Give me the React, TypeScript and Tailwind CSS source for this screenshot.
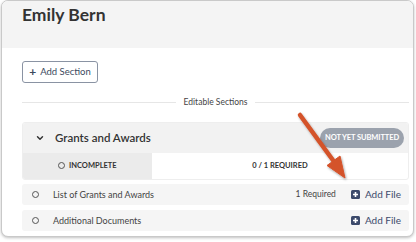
import React from "react";
import { ChevronDown } from "lucide-react";

const font = { fontFamily: "Lato, 'Open Sans', sans-serif" };

function PlusSquare() {
  return (
    <svg width="9" height="9" viewBox="0 0 9 9" className="shrink-0">
      <rect x="0" y="0" width="9" height="9" rx="1.5" fill="#3c4a6b" />
      <path d="M4.5 2v5M2 4.5h5" stroke="#fff" strokeWidth="1.6" />
    </svg>
  );
}

function Circle() {
  return <span className="inline-block size-[7px] shrink-0 rounded-full border border-[#555]" />;
}

function DocRow({ label, required }: { label: string; required?: string }) {
  return (
    <div className="flex h-[21px] items-center rounded-[3px] bg-[#f5f5f5] pl-[10px] pr-[8px] text-[9px] text-[#444]">
      <Circle />
      <span className="ml-[14px] flex-1">{label}</span>
      {required && <span className="mr-[15px] text-[8.5px] text-[#444]">{required}</span>}
      <PlusSquare />
      <span className="ml-[5px] text-[10px] text-[#3c4a6b]">Add File</span>
    </div>
  );
}

export default function App() {
  return (
    <div className="relative h-[242px] w-[416px] bg-white" style={font}>
      <div className="ml-[1px] h-[237px] w-[413px] overflow-hidden rounded-[7px] border border-[#c9c9c9] bg-white shadow-[0_1px_3px_rgba(0,0,0,0.25)]">
        <div className="h-[47px] bg-[#f4f4f4] pl-[20px] pt-[1px]">
          <h1 className="text-[17.5px] font-bold text-[#333]">Emily Bern</h1>
        </div>
        <div className="pl-[20px] pr-[4px]">
          <button className="mt-[13px] flex h-[22px] w-[76px] items-center justify-center gap-[4px] rounded-[3px] border border-[#8a93a3] text-[9.5px] text-[#3c4a5e]">
            <span className="text-[12px] font-bold leading-none">+</span>
            Add Section
          </button>
          <div className="mt-[13px] flex items-center gap-[8px]">
            <div className="h-px flex-1 bg-[#e6e6e6]" />
            <span className="text-[8.5px] text-[#444]">Editable Sections</span>
            <div className="h-px flex-1 bg-[#e6e6e6]" />
          </div>
          <div className="mt-[13px] overflow-hidden rounded-[3px] border border-[#eeeeee]">
            <div className="flex h-[30px] items-center bg-[#f2f2f2] pl-[12px] pr-[4px]">
              <ChevronDown className="size-[10px] text-[#333]" strokeWidth={3.5} />
              <span className="ml-[10px] flex-1 text-[11.5px] font-semibold text-[#333]">Grants and Awards</span>
              <span className="flex h-[20px] items-center rounded-full bg-[#9ba2ad] px-[5px] text-[7.5px] font-bold tracking-[-0.1px] text-white">
                NOT YET SUBMITTED
              </span>
            </div>
            <div className="flex h-[26px]">
              <div className="flex w-[129px] items-center gap-[4px] bg-[#ebebeb] pl-[35px] text-[7.5px] font-bold text-[#333]">
                <Circle />
                INCOMPLETE
              </div>
              <div className="flex flex-1 items-center justify-center text-[7.5px] font-bold text-[#333]">
                0 / 1 REQUIRED
              </div>
            </div>
          </div>
          <div className="mt-[4px] flex flex-col gap-[5px]">
            <DocRow label="List of Grants and Awards" required="1 Required" />
            <DocRow label="Additional Documents" />
          </div>
        </div>
      </div>
      <svg className="pointer-events-none absolute left-0 top-0" width="416" height="242">
        <defs>
          <filter id="sh" x="-20%" y="-20%" width="140%" height="140%">
            <feDropShadow dx="1" dy="1.5" stdDeviation="1.2" floodColor="#000" floodOpacity="0.35" />
          </filter>
        </defs>
        <g filter="url(#sh)" fill="#d4532b" stroke="#d4532b">
          <line x1="300" y1="115" x2="335" y2="163" strokeWidth="4.5" strokeLinecap="round" />
          <polygon points="340,156 327,165.5 345,178" strokeWidth="1" strokeLinejoin="round" />
        </g>
      </svg>
    </div>
  );
}
